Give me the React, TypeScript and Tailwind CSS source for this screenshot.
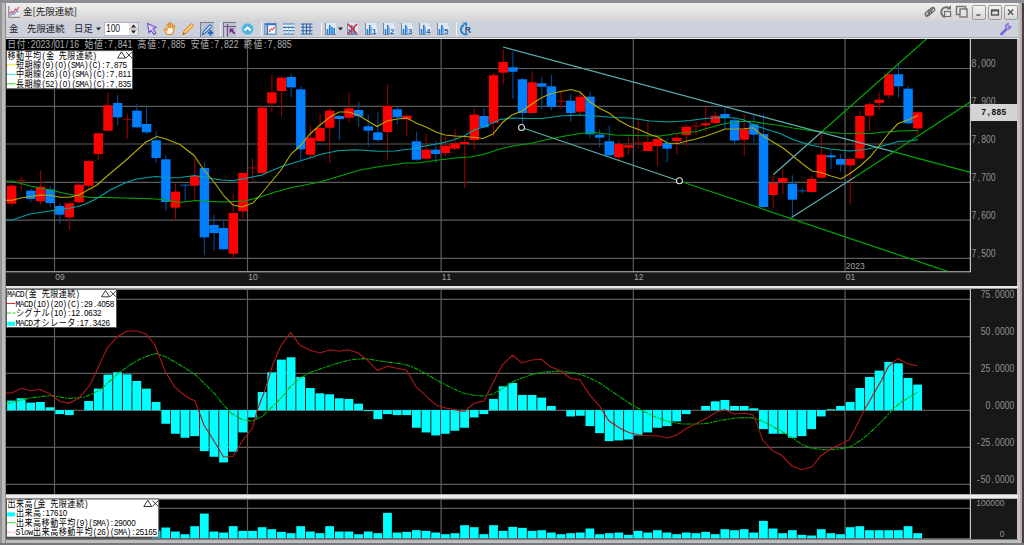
import React from "react";

type Candle = [c: "r" | "b", top: number, bottom: number, high: number, low: number];

const STEP = 9.64;
const X0 = 11.6;
const cx = (i: number) => X0 + STEP * i;

const CANDLES: Candle[] = [
  ["r", 185.7, 203.7, 184, 206.7], ["r", 180, 180.7, 176.7, 191.3], ["b", 190.7, 199, 188.3, 202], ["r", 186.7, 201.3, 170.3, 204.7],
  ["b", 189.3, 203, 185.7, 206.7], ["b", 206, 214.7, 203.3, 223.7], ["r", 203.3, 217.3, 202.7, 229.7], ["r", 184.7, 202.3, 181.3, 203.3],
  ["r", 161, 185.7, 160, 189], ["r", 133.3, 154, 132.7, 160.7], ["r", 105.3, 130.7, 92.7, 131.3], ["b", 103, 117.3, 94.7, 125.3],
  ["r", 119.2, 119.9, 114, 138.7], ["b", 110.7, 127.3, 103.7, 128], ["b", 124, 132.3, 107.3, 133.7], ["b", 140.3, 158, 131.3, 163],
  ["b", 159.3, 202, 155, 211], ["r", 191.7, 207.7, 183.7, 220.3], ["b", 184.7, 185.7, 184.3, 202], ["r", 176, 185.7, 158.7, 199.7],
  ["b", 168, 237.3, 162.3, 255.3], ["b", 225, 233, 214.7, 250.3], ["b", 228, 249.3, 219.7, 249.7], ["r", 213, 253.7, 193, 259.7],
  ["r", 173, 211.3, 172.3, 218], ["r", 167.5, 168.3, 158.7, 180.7], ["r", 107.7, 173, 106.3, 176.7], ["r", 92.3, 103.3, 74.3, 112],
  ["r", 77.7, 91, 75.7, 116.7], ["b", 77, 87.3, 73.7, 97], ["b", 89.3, 149.3, 86.3, 160.7], ["r", 137.7, 154.7, 125.7, 159.3],
  ["r", 128, 141, 113.7, 142], ["r", 110.7, 127.7, 107.7, 163], ["b", 116, 119, 115, 140.3], ["r", 108.3, 117.7, 92.3, 122],
  ["b", 110, 116.3, 102, 127], ["b", 126.3, 130.7, 115, 146.7], ["b", 132.3, 140, 112.3, 141.7], ["r", 106, 132, 84.7, 159.3],
  ["b", 109.3, 117.3, 106.3, 123.7], ["r", 115.7, 119.3, 115, 135.7], ["b", 141.3, 159.7, 131.7, 160.7], ["r", 149.7, 158.7, 134, 159.3],
  ["b", 149.7, 154, 141, 163], ["r", 145.7, 153, 136.3, 156], ["r", 143.3, 148.7, 129.3, 150], ["r", 142, 144, 137.3, 188],
  ["r", 114.7, 140, 108.3, 149], ["b", 116, 127.3, 108, 128], ["r", 75.3, 123, 72.7, 136.3], ["r", 62, 72.7, 49, 84.3],
  ["b", 67.3, 71.7, 51.7, 99], ["b", 79.3, 113, 77.7, 126], ["r", 82.3, 113, 71.3, 113.5], ["b", 83.3, 86.7, 76.7, 109.7],
  ["b", 86.3, 107, 75, 110.3], ["r", 100.7, 101.7, 90.3, 108.7], ["b", 100.7, 113, 94.3, 121.3], ["r", 96.7, 111.7, 91.3, 115.7],
  ["b", 96.7, 134.3, 91.7, 137.7], ["b", 134.7, 137.7, 129, 147.3], ["b", 141.3, 155.3, 125.7, 156.3], ["r", 144, 157.3, 140.3, 160],
  ["r", 145.3, 147.7, 137, 154.7], ["r", 142.5, 143.3, 117, 149], ["r", 142, 151, 119.7, 151.7], ["r", 139, 146, 137.7, 166],
  ["b", 143, 148.7, 138.7, 162.3], ["r", 137.7, 141, 134, 154.3], ["r", 126.7, 135, 124.7, 146.7], ["r", 125.7, 126.7, 121.7, 134.7],
  ["r", 123.3, 125.3, 107.3, 132], ["r", 115.7, 123, 111.7, 124], ["b", 114, 117.3, 107, 129.3], ["b", 120.2, 140.5, 117.7, 144.7],
  ["r", 129.3, 139.7, 114.3, 156], ["b", 124.3, 134.7, 115.3, 142.3], ["b", 134, 207, 114.3, 207.3], ["r", 183, 195, 174.7, 208],
  ["r", 178, 182.3, 168.7, 194], ["b", 183.7, 199.7, 175.3, 217.7], ["b", 190.4, 191.3, 188, 193.3], ["r", 179, 192, 175.3, 192.7],
  ["r", 154.7, 177.7, 132.3, 178], ["b", 155.3, 157.3, 150.3, 169.3], ["b", 159, 164.7, 154.3, 171.7], ["r", 159, 165.3, 158.7, 204.7],
  ["r", 116, 158.3, 110.7, 159.7], ["r", 104.3, 115.7, 102, 131], ["r", 99.7, 103, 92.3, 109.7], ["r", 74.3, 95.3, 72, 98.7],
  ["b", 74.3, 86.3, 63.3, 97.7], ["b", 88.7, 123.3, 86.3, 124.7], ["r", 112.3, 128.3, 112.3, 135],
];

const SMA_SHORT =
  "6,200.3 12,200.3 21,198 40,195 50,195.3 60,197.3 69,197.3 79,195 97,185 106,177 125,161 146,142 157,136.5 166,139 180,144.5 194,155.5 204,170 214,182 224,196 233,205 242,207 250,204 253,203 262,193 272,181 281,170 291,154 300,146 310,134 320,125 330,117 339,112 348,112 358,115 377,126.5 387,121 397,119 407,118 416,123 426,127 436,132 445,135 455,136 465,136.5 475,137.5 483,138.5 493,134 503,122 512,115 522,111 532,104 541,98 551,93.5 561,91.5 571,89.5 580,92 590,102 599,108 609,113 619,120.5 629,126 640,130 650,134.5 658,137 667,143 678,143.5 687,141 696,139 706,136 716,132.5 725,129 735,129 744,128.7 753,127.7 764,136.5 783,148 793,156 802,163.5 812,171 821,172.5 831,176 841,179 850,173.5 860,166 870,157 879,146 889,133 898,123.5 908,120 918,115.5";
const SMA_MID =
  "6,220 12,220 30,214 50,211 70,208 80,206 90,202 100,196.5 110,190 125,183 135,179.5 147,177.5 157,176.5 168,178 180,177.5 195,175.5 208,178 222,180 233,180.8 245,178.5 262,175 272,170.5 283,166 300,161 320,154.5 338,150.7 355,149.7 378,151.3 395,151 410,149 425,146 442,143 453,140 465,135.5 475,129.5 484,127 500,119.5 513,118 525,118.5 542,118.5 560,116 580,115 595,116 615,117.5 630,118 650,121 670,122 690,120.5 705,118.5 720,117.5 735,118 744,120 754,125 764,128.5 780,133.5 793,139.5 810,145 830,149 850,151 865,149.5 880,146.5 890,144 898,141.5 908,141 918,139.7";
const SMA_LONG =
  "6,181 12,181 30,186 50,190 70,194.5 90,197.5 105,197.5 125,198 150,198.8 163,199.5 180,202.5 195,200.5 222,202 245,201 260,197 275,192 292,187.5 320,182 340,176 360,170 380,166.5 395,164.5 405,163 417,163 435,160.5 455,158 470,157 485,154 500,149 513,146 530,143.5 550,139 565,136 580,133.5 595,132.5 615,135 635,135.5 660,136 680,133 697,131.5 710,127.5 725,123.5 740,121.5 753,121.5 765,123.5 780,125.5 793,128 810,130.5 840,133.3 870,133.5 885,132 900,131 918,130.5";
const MACD =
  "6,393 12,393 21.5,388.3 31,390.7 40,389.3 50,394 60,401.5 69,403.3 79,398 90,385 97,370 107,348.5 117,337 127,331 137,331 146,334 155,345 165,371 175,387.5 186,396.5 195,401 204,425 214,441 223.5,457 233,456.5 243,440 252.3,428.3 257.3,410 265,390 272.7,365 280.7,346 290.7,332.7 300,345.3 310,350.3 320,353 330,349.7 339.3,351.3 348.3,349.7 357.7,352.7 367.7,360.3 377.3,370.3 387.7,366.3 396.7,368.3 406.7,370.3 416,386.7 426.7,396.7 436,405 445.7,408 455,409.7 464.3,411.3 474,403.3 484,401 492.7,383.3 502.3,365 512.3,355.3 522,363 531.7,360 541.3,359.3 551,367 560.7,371 570.3,378.3 580,380 589.3,394.3 600,406.7 609,421 620,428.3 629.3,432.7 638.3,434.7 646.7,435.7 657.7,435.7 667.3,438 676.7,435 686.7,428.3 696.7,423.3 706.7,418.3 716,412.3 724.7,409.7 734,414 745,413.3 752.7,415 756,421 762.7,440.3 772.7,450.7 781.7,455.3 791.7,466 801.7,469.7 811.7,467 821,455.7 831,448.7 840.7,444.3 849.3,439.7 856,426.7 864.3,410 874,393.3 880.7,381.7 888.3,366.7 897.7,358.7 908.3,364 917.3,366";
const SIGNAL =
  "6,403.5 12,402.5 30,398 50,395.5 69,398.5 85,397 100,390 110,381 120,372 130,365 140,359 150,355 157,353.5 166,357 180,365 194,373.5 205,384 215,394 222,403.5 232,413.7 242,419.5 252,421 262,416.5 272,407 282,397 290,387 300,378 310,372.5 320,369 335,364 350,360 365,358.5 380,361 395,363 407,365 417,369 427,374.5 440,382 452,388 463,393 475,395.5 484,396 493,394 502,389 513,381.5 530,375 545,372 560,371 575,373 585,376 598,382 610,390 620,397 632,405 645,412 658,418 670,422 682,424 693,424 706,423.5 720,420.5 735,418 750,417.5 760,420 772,426 782,431.7 793,438.5 803,445 812,448.5 825,449.7 840,449 850,447 862,439.5 873,430 883,420 893,409 900,403 908,398 917,392.5";

// Histogram and volume lengths, in thirds of a pixel.
const OSC = [
  29, 36, 23, 25, 9, -12, -15, 0, 28, 65, 107, 114, 108, 88, 65, 25, -41, -71, -83, -78, -123, -140, -157, -125, -67, -22, 55, 114, 152, 159,
  100, 67, 51, 48, 36, 34, 20, -3, -27, -12, -15, -15, -53, -67, -76, -71, -62, -53, -22, -12, 34, 72, 82, 46, 46, 38, 13, 0, -19, -17,
  -48, -69, -93, -91, -88, -76, -67, -53, -48, -34, -12, 0, 13, 27, 31, 13, 13, 6, -57, -71, -71, -83, -78, -57, -19, 3, 13, 25, 67, 100,
  119, 145, 141, 97, 77,
];
const VOLUME = [
  22, 32, 20, 12, 36, 74, 20, 17, 36, 22, 22, 33, 27, 19, 15, 36, 20, 15, 36, 20, 20, 12, 20, 15, 76, 17, 19, 24, 22, 17, 12, 15, 39, 33, 12,
  39, 22, 34, 31, 22, 24, 17, 12, 15, 17, 29, 12, 15, 17, 10, 22, 17, 24, 17, 12, 17, 15, 19, 12, 27, 24, 27, 17, 52, 29, 15, 24, 10, 8, 27,
  15, 12, 33, 36, 24, 24, 24, 24, 36, 15,
];

const V_GRID = [54.5, 247.5, 441.1, 633.3, 845];

const SQUEEZE = 0.86;

/** Text on a fixed pitch: one cell for a Latin character, two for a Japanese one. */
function CellText({ x, y, cell, size, fill, children, bold, end }: {
  x: number; y: number; cell: number; size: number; fill: string; children: string; bold?: boolean; end?: boolean;
}) {
  const chars = [...children];
  const width = (c: string) => (c.charCodeAt(0) < 0x7f ? cell : cell * 2);
  let at = end ? x - chars.reduce((n, c) => n + width(c), 0) : x;
  const xs = chars.map((c) => {
    const middle = at + width(c) / 2;
    at += width(c);
    return (middle / SQUEEZE).toFixed(2);
  });
  const runs = children.match(/[A-Za-z]+|[^A-Za-z]+/g) ?? [];
  return (
    <text transform={`scale(${SQUEEZE} 1)`} x={xs.join(" ")} y={y} textAnchor="middle" xmlSpace="preserve" fontSize={size} fill={fill}
      className={bold ? "font-bold" : "font-normal"} fontFamily="'Liberation Sans', 'Noto Sans CJK JP', sans-serif">
      {runs.map((r, i) => (/[A-Za-z]/.test(r) ? <tspan key={i} fontFamily="'Liberation Mono', monospace">{r}</tspan> : r))}
    </text>
  );
}

function Grid({ ys, top, bottom }: { ys: number[]; top: number; bottom: number }) {
  return (
    <g stroke="#5c5c5c" strokeWidth="1.2">
      {ys.map((y) => <line key={y} x1="6" x2="970" y1={y} y2={y} />)}
      {V_GRID.map((x) => <line key={x} x1={x} x2={x} y1={top} y2={bottom} />)}
    </g>
  );
}

type Row = { mark: "line" | "dash" | "box"; color: string; text: string };

function Legend({ y, w, title, rows }: { y: number; w: number; title: string; rows: Row[] }) {
  const r = 6.5 + w;
  return (
    <g>
      <rect x="6.5" y={y} width={w} height="38.2" fill="#fff" stroke="#555" strokeWidth="1" />
      <CellText x={7.2} y={y + 8} cell={4.28} size={9.4} fill="#000">{title}</CellText>
      <path d={`M${r - 15} ${y + 7.5}l4-6.3 4 6.3zM${r - 6.5} ${y + 1.5}l6 6m0-6l-6 6`} fill="none" stroke="#222" strokeWidth=".9" />
      {rows.map((row, i) => {
        const b = y + 17.4 + i * 9.5;
        return (
          <g key={row.text}>
            {row.mark === "box"
              ? <rect x="7.3" y={b - 4} width="7.7" height="4" fill={row.color} />
              : <line x1="7" x2="15.5" y1={b - 3.2} y2={b - 3.2} stroke={row.color} strokeWidth="1.1" strokeDasharray={row.mark === "dash" ? "4 1.5" : undefined} />}
            <CellText x={15.7} y={b} cell={4.28} size={9.4} fill="#000">{row.text}</CellText>
          </g>
        );
      })}
    </g>
  );
}

function PriceChart() {
  return (
    <svg width="965" height="247" viewBox="6 39 965 247" className="block shrink-0 overflow-visible bg-black">
      <Grid ys={[68.5, 106.3, 144, 182.3, 220.2, 258.4]} top={39} bottom={271} />
      {CANDLES.map(([c, top, bottom, high, low], i) => (
        <g key={i}>
          <line x1={cx(i)} x2={cx(i)} y1={high} y2={low} stroke={c === "r" ? "#980000" : "#004a94"} strokeWidth="1.1" />
          <rect x={cx(i) - 4.7} width="9.4" y={top} height={Math.max(bottom - top, 0.8)} fill={bottom - top < 1.2 ? (c === "r" ? "#b00000" : "#0060c0") : c === "r" ? "#ff0000" : "#0080ff"} />
        </g>
      ))}
      <svg x="6" y="39" width="965" height="232" viewBox="6 39 965 232" fill="none" strokeWidth="1.1">
        <polyline points={SMA_LONG} stroke="#00a800" />
        <polyline points={SMA_MID} stroke="#00a5a5" />
        <polyline points={SMA_SHORT} stroke="#b4ac00" />
        <path d="M893 151.7L970.3 172.3M679.5 181L947.5 271.3M821.5 132L927 38.5M855 177L970.3 102" stroke="#00a800" strokeWidth="1.2" />
        <path d="M503 47L893 151.7M521.5 127.5L679.5 181M773.5 174.5L821.5 132M791.5 217.5L855 177" stroke="#5cb0b0" strokeWidth="1.2" />
        <circle cx="521.5" cy="127.5" r="3" fill="#000" stroke="#ddd" />
        <circle cx="679.4" cy="180.8" r="3" fill="#000" stroke="#ddd" />
      </svg>
      <rect x="6" y="272" width="965" height="14" fill="#181818" />
      <rect x="6" y="271" width="965" height="1.4" fill="#909090" />
      <rect x="969.8" y="39" width="1.2" height="233" fill="#c4c4c4" />
      {["09", "10", "11", "12"].map((m, i) => (
        <CellText key={m} x={V_GRID[i] + 0.7} y={280.3} cell={4.8} size={9.9} fill="#a2a2a2">{m}</CellText>
      ))}
      <CellText x={845.7} y={280.3} cell={4.8} size={9.9} fill="#a2a2a2">01</CellText>
      <CellText x={845.7} y={268.7} cell={4.8} size={9.9} fill="#a2a2a2">2023</CellText>
      <CellText x={6.7} y={48.5} cell={4.83} size={10.2} fill="#b0b0b0">日付:2023/01/16 始値:7,841 高値:7,885 安値:7,822 終値:7,885</CellText>
      <Legend y={50.6} w={126} title="移動平均(金 先限連続)" rows={[
        { mark: "line", color: "#f2ee20", text: "短期線(9)(0)(SMA)(C):7,875" },
        { mark: "line", color: "#30e8f0", text: "中期線(26)(0)(SMA)(C):7,811" },
        { mark: "line", color: "#30e030", text: "長期線(52)(0)(SMA)(C):7,835" },
      ]} />
    </svg>
  );
}

function PriceAxis() {
  return (
    <svg width="46" height="247" viewBox="971 39 46 247" className="block shrink-0 bg-[#181818]">
      {["8,000", "7,900", "7,800", "7,700", "7,600", "7,500"].map((t, i) => (
        <CellText key={t} x={971.5} y={66.7 + i * 38} cell={4.83} size={10} fill="#929292">{t}</CellText>
      ))}
      <rect x="971" y="104" width="46" height="17" fill="#d4d4d4" />
      <CellText x={981} y={115} cell={5.1} size={9.8} fill="#111" bold>7,885</CellText>
    </svg>
  );
}

function MacdChart() {
  return (
    <svg width="965" height="205" viewBox="6 289 965 205" className="block shrink-0 overflow-visible bg-black">
      <Grid ys={[299.4, 336.6, 373.4, 410.3, 447.3, 484.3]} top={289} bottom={494} />
      {OSC.map((d, i) => d !== 0 && (
        <rect key={i} x={cx(i) - 4.5} width="8.8" y={d > 0 ? 410.3 - d / 3 : 410.1} height={Math.abs(d) / 3} fill="#00ffff" />
      ))}
      <g fill="none" strokeWidth="1.1">
        <polyline points={SIGNAL} stroke="#00b000" strokeDasharray="5 1 2 1" />
        <polyline points={MACD} stroke="#b01818" />
      </g>
      <rect x="6" y="289" width="965" height="1" fill="#707070" />
      <rect x="969.8" y="289" width="1.2" height="205" fill="#c4c4c4" />
      <Legend y={289.3} w={110} title="MACD(金 先限連続)" rows={[
        { mark: "line", color: "#e83030", text: "MACD(10)(20)(C):29.4058" },
        { mark: "dash", color: "#30d830", text: "シグナル(10):12.0632" },
        { mark: "box", color: "#00ffff", text: "MACDオシレータ:17.3426" },
      ]} />
    </svg>
  );
}

function MacdAxis() {
  return (
    <svg width="46" height="205" viewBox="971 289 46 205" className="block shrink-0 overflow-visible bg-[#181818]">
      {["75.0000", "50.0000", "25.0000", "0.0000", "-25.0000", "-50.0000"].map((t, i) => (
        <CellText key={t} x={1014.3} y={297.8 + i * 36.95} cell={4.8} size={10} fill="#929292" end>{t}</CellText>
      ))}
    </svg>
  );
}

function VolumeChart() {
  return (
    <svg width="965" height="40" viewBox="6 499 965 40" className="block shrink-0 overflow-visible bg-black">
      <Grid ys={[508.3, 538.5]} top={499} bottom={539} />
      {VOLUME.map((d, i) => (
        <rect key={i} x={cx(i + 15) - 4.5} width="8.8" y={538.2 - d / 3} height={d / 3} fill="#00ffff" />
      ))}
      <rect x="6" y="499" width="965" height=".8" fill="#707070" />
      <rect x="969.8" y="499" width="1.2" height="40" fill="#c4c4c4" />
      <Legend y={499} w={152.3} title="出来高(金 先限連続)" rows={[
        { mark: "box", color: "#00ffff", text: "出来高:17610" },
        { mark: "line", color: "#40e840", text: "出来高移動平均(9)(SMA):29000" },
        { mark: "dash", color: "#e8a0e8", text: "Slow出来高移動平均(26)(SMA):25165" },
      ]} />
    </svg>
  );
}

function VolumeAxis() {
  return (
    <svg width="46" height="40" viewBox="971 499 46 40" className="block shrink-0 overflow-visible bg-[#181818]">
      <CellText x={1004.5} y={506.5} cell={4.7} size={9.9} fill="#929292" end>100000</CellText>
      <CellText x={1004.5} y={536.7} cell={4.7} size={9.9} fill="#929292" end>0</CellText>
    </svg>
  );
}

function Icon({ children, w = 14 }: { children: React.ReactNode; w?: number }) {
  return <svg width={w} height="14" viewBox={`0 0 ${w} 14`} className="block shrink-0" fill="none">{children}</svg>;
}

function BarIcon({ tag }: { tag?: string }) {
  return (
    <Icon w={13}>
      <rect x="1" y="1" width="11" height="12" fill="#dfe6ee" />
      <path d="M1.5 1v11.5H12" stroke="#7d8794" />
      <path d="M3.5 12V7M5.8 12V3M8 12V5" stroke="#1d80dc" strokeWidth="1.6" />
      {tag === "x" && <path d="M2 2l9 10M11 2L2 12" stroke="#e03038" strokeWidth="1.8" />}
      {!tag && <path d="M10.2 12V6" stroke="#1d80dc" strokeWidth="1.6" />}
      {tag && tag !== "x" && (
        <>
          <rect x="7.6" y="5" width="5.4" height="7.4" fill="#e6edf5" />
          <text x="8" y="11.6" fontSize="8" fontWeight="700" fontFamily="Liberation Sans, sans-serif" fill="#2862ac">{tag}</text>
        </>
      )}
    </Icon>
  );
}

const Sep = ({ className }: { className: string }) => <div className={`h-3.5 w-px shrink-0 bg-[#eff1f5] ${className}`} />;

function TitleBar() {
  return (
    <div className="flex h-[18px] shrink-0 items-center bg-linear-to-b from-[#f0f0f0] to-[#d4d4d4] pl-[2px]">
      <svg width="12" height="12" viewBox="0 0 12 12" fill="none" className="block">
        <rect x=".5" y=".5" width="11" height="11" fill="#eee9ed" />
        <path d="M.8 0v11.3H12" stroke="#777" />
        <path d="M1.5 8l2-2.5L5 7l2.5-4L9 4l2-3" stroke="#e05060" strokeWidth="1.2" />
        <path d="M2 9.5L4 8l2 .5L8.5 5l2 1" stroke="#5c90d8" strokeWidth="1.1" />
      </svg>
      <div className="ml-[3px] font-['Noto_Sans_CJK_JP',sans-serif] text-[9.5px] leading-none text-[#222]">金[先限連続]</div>
      <div className="ml-auto mr-[4px] flex gap-[3px]">
        <Icon w={13}>
          <g stroke="#6c6c6c" strokeWidth="1.3">
            <rect x="2" y="6" width="7" height="4" rx="2" transform="rotate(-40 5.5 8)" />
            <rect x="5" y="3.5" width="7" height="4" rx="2" transform="rotate(-40 8.5 5.5)" />
            <path d="M3 12l8-10" />
          </g>
        </Icon>
        <Icon w={13}>
          <path d="M10 3A5 5 0 1 0 6 12" stroke="#707070" strokeWidth="2" />
          <path d="M7.5 4.5h4.5V0z" fill="#707070" />
          <rect x="5.6" y="6.5" width="6" height="5" fill="#e4e4e4" stroke="#707070" strokeWidth="1.2" />
        </Icon>
        <Icon w={13}>
          <rect x="1.5" y="1.5" width="9" height="8" stroke="#737373" strokeWidth="1.4" />
          <rect x="5" y="4" width="7" height="8" fill="#e4e4e4" stroke="#737373" strokeWidth="1.4" />
        </Icon>
      </div>
      <div className="flex gap-[2px]">
        {["M4 10h4.5", "M3 4h8v6H3zM3 5h8", "M3.5 3.5l6 6m0-6l-6 6"].map((d) => (
          <div key={d} className="h-[15px] w-[14px] rounded-[2px] border border-[#9b9b9b] bg-linear-to-b from-[#f4f4f4] to-[#d6d6d6]">
            <svg width="12" height="13" viewBox="0 0 14 14" className="block" fill="none"><path d={d} stroke="#555" strokeWidth="1.7" /></svg>
          </div>
        ))}
      </div>
    </div>
  );
}

function Toolbar() {
  return (
    <div className="flex h-4 shrink-0 items-center bg-[#cdd1dc] pl-[3px] font-['Noto_Sans_CJK_JP',sans-serif] text-[9.4px] leading-none text-[#1c1c24]">
      <div className="w-[18px]">金</div>
      <div className="w-[47px]">先限連続</div>
      <div className="w-[22px]">日足</div>
      <svg width="5" height="4" className="block"><path d="M0 .5h5L2.5 3.5z" fill="#222" /></svg>
      <div className="ml-[3px] flex h-3.5 w-[35px] items-center border border-[#b4b8c0] bg-white">
        <svg width="24" height="12" className="block overflow-visible">
          <CellText x={1} y={8.9} cell={4.7} size={10} fill="#222">100</CellText>
        </svg>
        <svg width="9" height="12" className="block bg-[#e4e4e8]">
          <path d="M4.5 1.5L7 4.5H2zM4.5 10.5L7 7.5H2z" fill="#222" />
          <path d="M0 6h9" stroke="#aaa" />
        </svg>
      </div>
      <div className="ml-[6px]">
        <Icon><path d="M2.5 1.5l8.7 4-3.2 1.3 3 4.2-2 1.4L6 8.5l-2 2.2z" fill="#dcd4fa" stroke="#6c55bc" strokeWidth="1.1" /></Icon>
      </div>
      <div className="ml-[4px]">
        <Icon><path d="M4 12.5L1.3 8c-.5-1 .6-1.5 1.2-.8L4 8.4V3c0-1 1.3-1 1.4 0L5.8 6V1.8c0-1.2 1.5-1.2 1.5 0V6l.6-3.8c.2-1 1.5-.8 1.4.3l-.2 4L10.4 4c.5-.9 1.5-.4 1.2.5L10.5 9l-1.3 3.5z" fill="#fff2dc" stroke="#da8a28" strokeWidth="1.1" /></Icon>
      </div>
      <div className="ml-[4px]">
        <Icon><path d="M2 12.5l1-3.5 7-7c1-.8 2.8.7 2 2l-7 7z" fill="#ffd88a" stroke="#de8e30" strokeWidth="1.1" /><path d="M2 12.5l.6-2 1.5 1.3z" fill="#754010" /></Icon>
      </div>
      <div className="ml-[5px] border-l border-t border-[#7c808a] bg-[#b9c2d0]">
        <Icon w={13}><path d="M1.5 11.5l1-3 6-6.3c1-.8 2.6.7 1.8 1.8l-6 6z" fill="#e8f2ff" stroke="#2e6cc0" strokeWidth="1.1" /><path d="M9.5 7v5.5M6.8 9.8h5.5" stroke="#2863c0" strokeWidth="2" /></Icon>
      </div>
      <Sep className="ml-[6px]" />
      <div className="ml-[2px] border-l border-t border-[#777b84] bg-[#c0c4cc]">
        <Icon w={12}><path d="M0 3.5h12M3.5 1v12.5" stroke="#6c4b94" strokeWidth="1.2" /><path d="M5.5 5.5h5l-1.7 1.6 2.7 3-1.4 1.4-2.8-3L5.5 10.5z" fill="#7a2f94" /></Icon>
      </div>
      <div className="ml-[5px]">
        <Icon><circle cx="6.6" cy="7" r="5.8" fill="#52b6dc" stroke="#88c8e0" strokeWidth=".6" /><path d="M3.5 8.5l3.1-3 3.1 3" stroke="#fff" strokeWidth="1.8" /></Icon>
      </div>
      <Sep className="ml-[6px]" />
      <div className="ml-[2px]">
        <Icon><rect x="1" y="1.7" width="11" height="10.5" fill="#f5f8ff" stroke="#3575be" /><path d="M1 2.5h11M3.3 2v10" stroke="#3575be" strokeWidth="1.6" /><path d="M5.5 10V8.5L7.5 7l1 .8L11 4.5" stroke="#e05050" strokeWidth="1.2" /></Icon>
      </div>
      <div className="ml-[4px]">
        <Icon><rect x="1" y="1.7" width="11" height="10.5" fill="#e8f0f8" /><path d="M1 2h11.5M1 5.3h11.5M1 8.7h11.5M1 12h11.5" stroke="#3e79b6" strokeWidth="1.2" /><path d="M3 2v10M6.5 2v10M10 2v10" stroke="#8cb2d8" strokeDasharray="1 1" /></Icon>
      </div>
      <div className="ml-[4px]">
        <Icon><rect x="1" y="1.7" width="11" height="10.5" fill="#cfe0f5" /><path d="M1 2h11.5M1 5.3h11.5M1 8.7h11.5M1 12h11.5M3 2v10M6.5 2v10M10 2v10" stroke="#345d96" strokeWidth="1.1" /></Icon>
      </div>
      <Sep className="ml-[7px]" />
      <div className="ml-[2px]"><BarIcon /></div>
      <svg width="5" height="4" className="ml-px block shrink-0"><path d="M0 .5h5L2.5 3.5z" fill="#222" /></svg>
      <div className="ml-[3px] flex gap-[5px]">
        {["x", "1", "2", "3", "4", "5"].map((t) => <BarIcon key={t} tag={t} />)}
      </div>
      <Sep className="ml-[7px]" />
      <div className="ml-[2px]">
        <Icon>
          <path d="M5 3A4.7 4.7 0 1 0 8.5 12" stroke="#1682d4" strokeWidth="2" />
          <path d="M3.5 0.5H8v4.5z" fill="#1682d4" />
          <text x="5.8" y="10.5" fontSize="8.5" fontWeight="700" fontFamily="Liberation Sans, sans-serif" fill="#204f94">R</text>
        </Icon>
      </div>
      <div className="ml-auto mr-[5px]">
        <Icon><path d="M2.5 12L7 7.3" stroke="#7068dc" strokeWidth="2.6" strokeLinecap="round" /><path d="M9.3 1.5C6.5 2 6 4.5 7 6.5c1.7 1.6 4.5.5 5-2L9.7 5 9 3.7z" fill="#b6b0fa" stroke="#7068dc" strokeWidth="1.1" /></Icon>
      </div>
    </div>
  );
}

export default function App() {
  return (
    <div className="flex h-[545px] w-[1024px] flex-col overflow-hidden bg-[#8f9095]">
      <div className="h-[3px] shrink-0 bg-[#8d8e93]" />
      <div className="flex h-[540px] shrink-0">
        <div className="flex w-[6px] shrink-0">
          <div className="w-[2px] bg-[#949494]" />
          <div className="w-[3px] bg-[#bcbcbc]" />
          <div className="w-px bg-[#8c8c8c]" />
        </div>
        <div className="flex w-[1012px] shrink-0 flex-col bg-[#c6c6c6]">
          <TitleBar />
          <Toolbar />
          <div className="h-px shrink-0 bg-[#a4a8b2]" />
          <div className="h-px shrink-0 bg-[#e8e8e8]" />
          <div className="flex shrink-0"><PriceChart /><PriceAxis /></div>
          <div className="h-[3px] shrink-0 border-b border-[#9a9a9a] bg-[#e8e8e8]" />
          <div className="flex shrink-0"><MacdChart /><MacdAxis /></div>
          <div className="h-[5px] shrink-0 border-y border-[#b4b4b4] bg-[#ededed]" />
          <div className="flex shrink-0"><VolumeChart /><VolumeAxis /></div>
          <div className="h-px shrink-0 bg-[#777]" />
          <div className="h-[3px] shrink-0 bg-[#bcbcbc]" />
        </div>
        <div className="flex w-[6px] shrink-0">
          <div className="w-[2px] bg-[#c6c6c6]" />
          <div className="w-[2px] bg-[#b0b0b0]" />
          <div className="w-[2px] bg-[#503c3e]" />
        </div>
      </div>
      <div className="h-0.5 shrink-0 bg-[#77787c]" />
    </div>
  );
}
